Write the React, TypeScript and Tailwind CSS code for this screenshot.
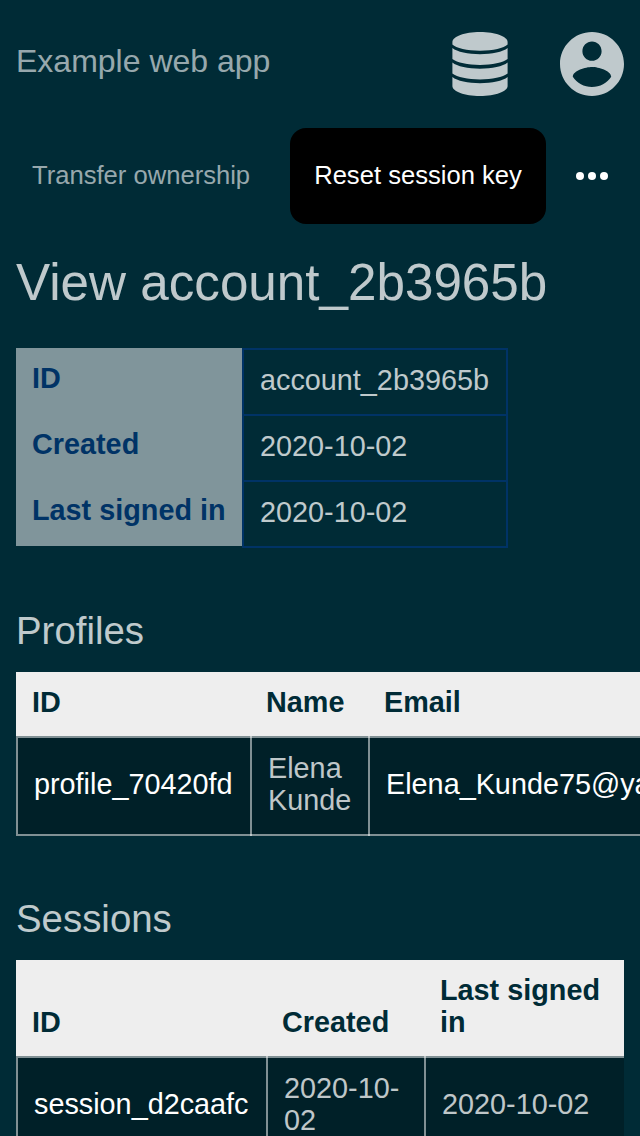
import type { ReactNode } from 'react';

function DatabaseIcon() {
  return (
    <svg viewBox="0 0 64 64" className="size-16" fill="currentColor" aria-hidden="true">
      <path d="M32 0C47.5 0 59.6 4.6 59.6 10v2.6C56 16.2 45 18.8 32 18.8S8 16.2 4.4 12.6V10C4.4 4.6 16.5 0 32 0Z" />
      <path d="M4.4 16C9 19.9 20 22.2 32 22.2s23-2.3 27.6-6.2v11C55 30.7 44 32.9 32 32.9S9 30.7 4.4 27Z" />
      <path d="M4.4 30.6C9 34.5 20 36.8 32 36.8s23-2.3 27.6-6.2v11C55 45.2 44 47.4 32 47.4S9 45.2 4.4 41.6Z" />
      <path d="M4.4 45.1C9 49 20 51.2 32 51.2S55 49 59.6 45.1V54c0 5.4-12.1 10-27.6 10S4.4 59.4 4.4 54Z" />
    </svg>
  );
}

function AccountIcon() {
  return (
    <svg viewBox="2 2 20 20" className="size-16" fill="currentColor" aria-hidden="true">
      <path d="M12 2C6.48 2 2 6.48 2 12s4.48 10 10 10 10-4.48 10-10S17.52 2 12 2zm0 3c1.66 0 3 1.34 3 3s-1.34 3-3 3-3-1.34-3-3 1.34-3 3-3zm0 14.2c-2.5 0-4.71-1.28-6-3.22.03-1.99 4-3.08 6-3.08 1.99 0 5.97 1.09 6 3.08-1.29 1.94-3.5 3.22-6 3.22z" />
    </svg>
  );
}

function MoreIcon() {
  return (
    <svg viewBox="0 0 32 8" className="h-2 w-8" fill="currentColor" aria-hidden="true">
      <circle cx="4" cy="4" r="4" />
      <circle cx="16" cy="4" r="4" />
      <circle cx="28" cy="4" r="4" />
    </svg>
  );
}

const account = [
  ['ID', 'account_2b3965b'],
  ['Created', '2020-10-02'],
  ['Last signed in', '2020-10-02'],
];

function Head({ children }: { children: ReactNode }) {
  return (
    <th className="bg-[#eeeeee] px-4 pt-[14px] pb-[18px] text-left align-bottom font-bold text-[#002b36]">
      {children}
    </th>
  );
}

function Cell({ children, link = false }: { children: ReactNode; link?: boolean }) {
  return (
    <td
      className={`relative border-y-2 border-white/50 bg-black/25 pt-[14px] pr-4 pb-[18px] pl-[18px] align-middle before:absolute before:left-0 before:w-0.5 before:bg-white/50 first:before:inset-y-0 not-first:before:-inset-y-0.5 ${link ? 'text-white' : 'text-white/75'}`}
    >
      {children}
    </td>
  );
}

export default function App() {
  return (
    <div className="h-[1136px] overflow-hidden bg-[#002b36] px-4 font-['Liberation_Sans',sans-serif] text-[28.8px] leading-8 text-white/75">
      <header className="flex h-32 items-center justify-between">
        <div className="pb-1.5 text-[32px] leading-10 text-white/60">Example web app</div>
        <div className="flex gap-12">
          <DatabaseIcon />
          <AccountIcon />
        </div>
      </header>
      <nav className="flex h-24 items-center text-[25.6px]">
        <button className="w-[250px] pb-0.5 pl-4 text-left text-white/60">Transfer ownership</button>
        <button className="ml-6 h-24 w-64 rounded-2xl bg-black pb-0.5 text-white">Reset session key</button>
        <button className="ml-[30px] text-white" aria-label="More actions">
          <MoreIcon />
        </button>
      </nav>
      <h1 className="mt-7 h-24 text-[51.2px] leading-[62px]">View account_2b3965b</h1>
      <table className="w-[492px] table-fixed border-separate border-spacing-0">
        <colgroup>
          <col className="w-[226px]" />
          <col />
        </colgroup>
        <tbody>
          {account.map(([label, value]) => (
            <tr key={label} className="group">
              <th className="border-transparent bg-[#80959b] bg-clip-padding px-4 pt-[14px] pb-[18px] text-left align-top font-bold whitespace-nowrap text-[#003366] group-last:border-b-2">
                {label}
              </th>
              <td className="border-x-2 border-t-2 border-[#003366] px-4 pt-[14px] pb-[18px] group-last:border-b-2">
                {value}
              </td>
            </tr>
          ))}
        </tbody>
      </table>
      <h2 className="mt-[60px] h-16 text-[38.4px] leading-[46px]">Profiles</h2>
      <table className="w-[856px] table-fixed border-separate border-spacing-0">
        <colgroup>
          <col className="w-[234px]" />
          <col className="w-[118px]" />
          <col />
        </colgroup>
        <thead>
          <tr>
            <Head>ID</Head>
            <Head>Name</Head>
            <Head>Email</Head>
          </tr>
        </thead>
        <tbody>
          <tr>
            <Cell link>profile_70420fd</Cell>
            <Cell>Elena Kunde</Cell>
            <Cell link>Elena_Kunde75@yahoo.com</Cell>
          </tr>
        </tbody>
      </table>
      <h2 className="mt-[60px] h-16 text-[38.4px] leading-[46px]">Sessions</h2>
      <div className="w-[608px] overflow-hidden">
        <table className="w-[620px] table-fixed border-separate border-spacing-0">
          <colgroup>
            <col className="w-[250px]" />
            <col className="w-[158px]" />
            <col />
          </colgroup>
          <thead>
            <tr>
              <Head>ID</Head>
              <Head>Created</Head>
              <Head>Last signed<br />in</Head>
            </tr>
          </thead>
          <tbody>
            <tr>
              <Cell link>session_d2caafc</Cell>
              <Cell>2020-10-02</Cell>
              <Cell>2020-10-02</Cell>
            </tr>
          </tbody>
        </table>
      </div>
    </div>
  );
}
